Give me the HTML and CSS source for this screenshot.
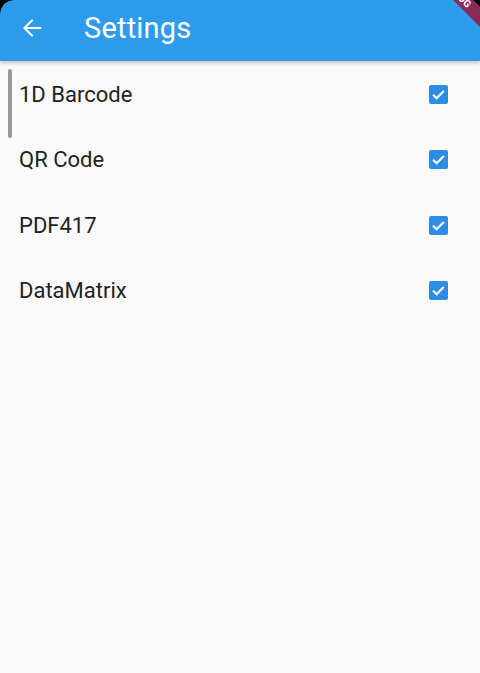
FILE: index.html
```html
<!DOCTYPE html>
<html>
<head>
<meta charset="utf-8">
<link rel="stylesheet" href="styles.css">
</head>
<body>
<div class="screen">
  <header class="appbar">
    <span class="back">
      <svg width="28" height="28" viewBox="0 0 24 24"><path d="M20 11.1H7.6l5.6-5.6L12 4.3 4.3 12l7.7 7.7 1.2-1.2-5.6-5.6H20z" fill="#fff"/></svg>
    </span>
    <h1 class="title">Settings</h1>
  </header>
  <main class="list">
    <div class="scrollbar"></div>
    <div class="row"><span class="label">1D Barcode</span><span class="check"><svg width="19" height="19" viewBox="0 0 20 20"><path d="M4.3 10.2l3.7 3.7 7.6-7.6" fill="none" stroke="#fff" stroke-width="2.4"/></svg></span></div>
    <div class="row"><span class="label">QR Code</span><span class="check"><svg width="19" height="19" viewBox="0 0 20 20"><path d="M4.3 10.2l3.7 3.7 7.6-7.6" fill="none" stroke="#fff" stroke-width="2.4"/></svg></span></div>
    <div class="row"><span class="label">PDF417</span><span class="check"><svg width="19" height="19" viewBox="0 0 20 20"><path d="M4.3 10.2l3.7 3.7 7.6-7.6" fill="none" stroke="#fff" stroke-width="2.4"/></svg></span></div>
    <div class="row"><span class="label">DataMatrix</span><span class="check"><svg width="19" height="19" viewBox="0 0 20 20"><path d="M4.3 10.2l3.7 3.7 7.6-7.6" fill="none" stroke="#fff" stroke-width="2.4"/></svg></span></div>
  </main>
  <div class="corner-tl"></div>
  <div class="banner"><span>DEBUG</span></div>
</div>
</body>
</html>
```
FILE: styles.css
```css
* { box-sizing: border-box; }
html, body { margin: 0; padding: 0; background: #000; }
.screen {
  position: relative;
  width: 480px;
  height: 673px;
  overflow: hidden;
  background: #fafafa;
  font-family: Roboto, "Noto Sans", sans-serif;
}
.appbar {
  height: 61px;
  background: #2e9bec;
  display: flex;
  align-items: center;
  padding-bottom: 5px;
  box-shadow: 0 2px 4px rgba(0,0,0,0.22);
  position: relative;
  z-index: 2;
}
.back {
  width: 28px;
  height: 28px;
  margin-left: 18px;
  display: flex;
}
.title {
  margin: 0 0 0 38px;
  color: #fff;
  font-size: 29px;
  font-weight: 400;
  letter-spacing: 0.2px;
}
.list {
  position: relative;
  padding-top: 1px;
}
.scrollbar {
  position: absolute;
  left: 8px;
  top: 8px;
  width: 4px;
  height: 69px;
  border-radius: 2px;
  background: #999;
}
.row {
  height: 65.3px;
  display: flex;
  align-items: center;
  justify-content: space-between;
  padding: 0 32px 0 19px;
}
.label {
  font-size: 22px;
  color: #222;
}
.check {
  width: 19px;
  height: 19px;
  border-radius: 2px;
  background: #2c8de3;
  display: flex;
}
.corner-tl {
  position: absolute;
  left: 0; top: 0;
  width: 14px; height: 14px;
  background: radial-gradient(circle at 14px 14px, transparent 13.5px, #000 14px);
  z-index: 5;
}
.banner {
  position: absolute;
  left: 395px;
  top: -15px;
  width: 120px;
  height: 14px;
  background: #8a2a56;
  box-shadow: 0 -20px 0 6px #000;
  transform: rotate(45deg);
  color: #fff;
  font: bold 10px/14px Roboto, sans-serif;
  text-align: center;
  z-index: 5;
}
.banner span {
  display: inline-block;
  transform: translateX(4px);
}
```
